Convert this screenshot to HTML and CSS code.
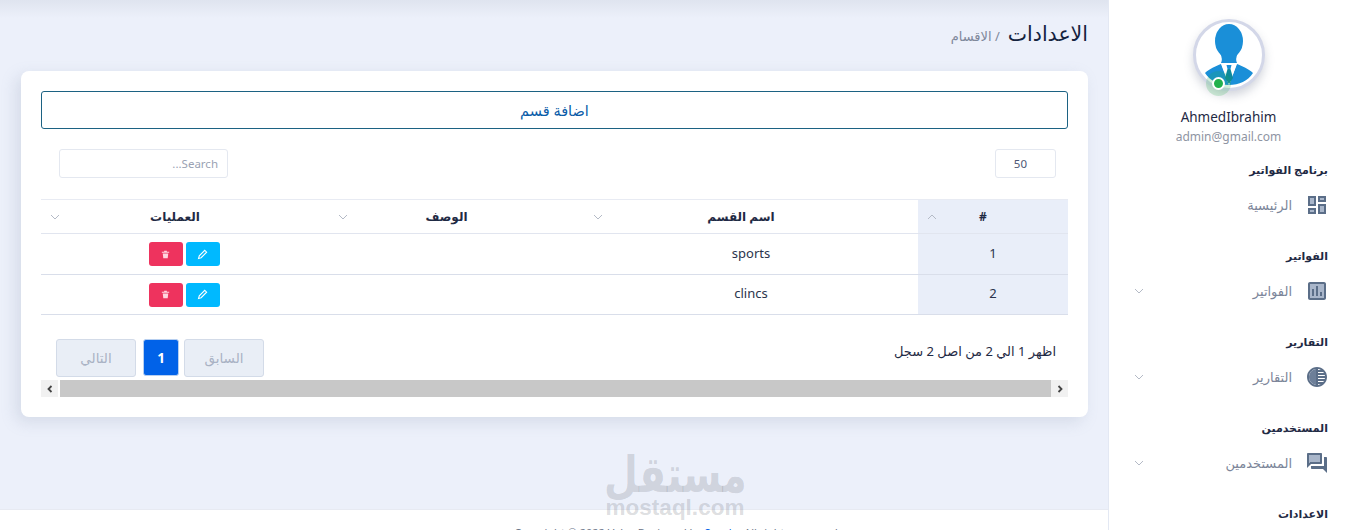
FILE: index.html
```html
<!DOCTYPE html>
<html lang="ar" dir="rtl">
<head>
	<title>الاقسام</title>
	<meta http-equiv="Content-Type" content="text/html; charset=utf-8" />
	<link rel="stylesheet" href="styles.css">
</head>
<body>
	<div class="page">
		<aside class="side">
			<div class="profile">
				<div class="avatar">
					<svg viewBox="0 0 66 66" width="66" height="66">
						<ellipse fill="#1a8fd8" cx="33" cy="19" rx="14" ry="17"/>
						<path fill="#1a8fd8" d="M24 31q3 6 1 10h16q-2-4 1-10z"/>
						<path fill="#1a8fd8" d="M9 51c4-4 11-7 16-9l8 21c-10 0-19-4-24-12zM57 51c-4-4-11-7-16-9l-8 21c10 0 19-4 24-12z"/>
						<path fill="#fff" d="M25 41h16l-8 22z"/>
						<path fill="#1a8fd8" d="M30.500 43h5l-1 4h-3z"/>
						<path fill="#0d8a9c" d="M31.500 47h3l2.500 9-4 6-4-6z"/>
					</svg>
					<span class="online"></span>
				</div>
				<div class="name">AhmedIbrahim</div>
				<div class="mail">admin@gmail.com</div>
			</div>
			<div class="cat">برنامج الفواتير</div>
			<div class="item">
				<svg class="ico" viewBox="0 0 24 24"><path class="two" d="M5 5h4v6H5zm10 8h4v6h-4zM5 17h4v2H5zM15 5h4v2h-4z"/><path d="M3 13h8V3H3v10zm2-8h4v6H5V5zm8 16h8V11h-8v10zm2-8h4v6h-4v-6zM13 3v6h8V3h-8zm6 4h-4V5h4v2zM3 21h8v-6H3v6zm2-4h4v2H5v-2z"/></svg>
				<span>الرئيسية</span>
			</div>
			<div class="cat">الفواتير</div>
			<div class="item">
				<svg class="ico" viewBox="0 0 24 24"><path class="two" d="M19 5H5v14h14V5zM9 17H7v-7h2v7zm4 0h-2V7h2v10zm4 0h-2v-4h2v4z"/><path d="M3 5v14c0 1.100.9 2 2 2h14c1.100 0 2-.9 2-2V5c0-1.100-.9-2-2-2H5c-1.100 0-2 .9-2 2zm2 0h14v14H5V5zm2 5h2v7H7zm4-3h2v10h-2zm4 6h2v4h-2z"/></svg>
				<span>الفواتير</span>
				<svg class="arrow" viewBox="0 0 12 12"><path d="M2 4l4 4 4-4"/></svg>
			</div>
			<div class="cat">التقارير</div>
			<div class="item">
				<svg class="ico" viewBox="0 0 24 24"><path d="M12 2C6.490 2 2 6.490 2 12s4.490 10 10 10 10-4.490 10-10S17.510 2 12 2zm-1 17.930c-3.940-.49-7-3.850-7-7.930s3.050-7.440 7-7.930v15.860zm2-15.860c1.030.13 2 .45 2.870.93H13v-.93zM13 7h5.240c.25.31.48.65.68 1H13V7zm0 3h6.740c.08.33.15.66.19 1H13v-1zm0 9.930V19h2.870c-.87.48-1.840.8-2.870.93zM18.240 17H13v-1h5.920c-.2.35-.43.69-.68 1zm1.500-3H13v-1h6.930c-.04.34-.11.67-.19 1z"/><path class="half" d="M11 19.930c-3.940-.49-7-3.850-7-7.930s3.050-7.440 7-7.930v15.860z"/></svg>
				<span>التقارير</span>
				<svg class="arrow" viewBox="0 0 12 12"><path d="M2 4l4 4 4-4"/></svg>
			</div>
			<div class="cat">المستخدمين</div>
			<div class="item">
				<svg class="ico" viewBox="0 0 24 24"><path class="two" d="M15 11V4H4v8.170l.59-.58.58-.59H6z"/><path d="M21 6h-2v9H6v2c0 .55.45 1 1 1h11l4 4V7c0-.55-.45-1-1-1zm-5 7c.55 0 1-.45 1-1V3c0-.55-.45-1-1-1H3c-.55 0-1 .45-1 1v14l4-4h10zM4.590 11.590l-.59.58V4h11v7H5.170l-.58.59z"/></svg>
				<span>المستخدمين</span>
				<svg class="arrow" viewBox="0 0 12 12"><path d="M2 4l4 4 4-4"/></svg>
			</div>
			<div class="cat">الاعدادات</div>
		</aside>

		<main class="main">
			<div class="content">
				<div class="crumbs">
					<h4>الاعدادات</h4>
					<span>/ الاقسام</span>
				</div>
				<div class="card">
					<button class="add">اضافة قسم</button>
					<div class="tools">
						<div class="length">50</div>
						<div class="search">Search...</div>
					</div>
					<table class="grid">
						<colgroup>
							<col class="c1"><col class="c2"><col class="c3"><col class="c4">
						</colgroup>
						<thead>
							<tr>
								<th class="on">#<svg class="sort" viewBox="0 0 12 12"><path d="M2 8l4-4 4 4"/></svg></th>
								<th>اسم القسم<svg class="sort" viewBox="0 0 12 12"><path d="M2 4l4 4 4-4"/></svg></th>
								<th>الوصف<svg class="sort" viewBox="0 0 12 12"><path d="M2 4l4 4 4-4"/></svg></th>
								<th>العمليات<svg class="sort" viewBox="0 0 12 12"><path d="M2 4l4 4 4-4"/></svg></th>
							</tr>
						</thead>
						<tbody>
							<tr class="first">
								<td class="on">1</td>
								<td>sports</td>
								<td></td>
								<td>
									<div class="ops">
										<a class="btn edit"><svg viewBox="0 0 12 12"><path d="M8.500 1.500l2 2-6 6-2.800.8.800-2.800z"/></svg></a>
										<a class="btn del"><svg viewBox="0 0 12 12"><path d="M2 3h8v1.200H2zM4.500 1.800h3V3h-3zM3 4.800h6l-.6 5.400H3.600z"/></svg></a>
									</div>
								</td>
							</tr>
							<tr>
								<td class="on">2</td>
								<td>clincs</td>
								<td></td>
								<td>
									<div class="ops">
										<a class="btn edit"><svg viewBox="0 0 12 12"><path d="M8.500 1.500l2 2-6 6-2.800.8.800-2.800z"/></svg></a>
										<a class="btn del"><svg viewBox="0 0 12 12"><path d="M2 3h8v1.200H2zM4.500 1.800h3V3h-3zM3 4.800h6l-.6 5.400H3.600z"/></svg></a>
									</div>
								</td>
							</tr>
						</tbody>
					</table>
					<div class="bottom">
						<div class="info">اظهر 1 الي 2 من اصل 2 سجل</div>
						<div class="pager">
							<a class="pg">السابق</a>
							<a class="pg cur">1</a>
							<a class="pg">التالي</a>
						</div>
					</div>
					<div class="bar">
						<span class="end"><svg viewBox="0 0 10 10"><path d="M3.500 2l3 3-3 3"/></svg></span>
						<span class="thumb"></span>
						<span class="end"><svg viewBox="0 0 10 10"><path d="M6.500 2l-3 3 3 3"/></svg></span>
					</div>
				</div>
			</div>
			<footer class="foot" dir="ltr">Copyright © 2022 Valex Designed by <a>Spruko</a> All rights reserved</footer>
			<div class="mark">
				<div class="mark-ar">مستقل</div>
				<div class="mark-en" dir="ltr">mostaql.com</div>
			</div>
		</main>
	</div>
</body>
</html>
```

FILE: styles.css
```css
*{
	margin: 0;
	padding: 0;
	box-sizing: border-box;
}
html, body{
	height: 100%;
	overflow: hidden;
}
body{
	font-family: "Noto Sans", "DejaVu Sans", sans-serif;
	font-size: 13px;
	color: #1f2a44;
	background: #ecf0fa;
}
.page{
	display: flex;
	height: 530px;
	overflow: hidden;
}

/* sidebar */
.side{
	width: 242px;
	flex-shrink: 0;
	background: #fff;
	border-left: 1px solid #e3e8f3;
	padding: 19px 22px 0 0;
}
.profile{
	display: flex;
	flex-direction: column;
	align-items: center;
	margin-right: -22px;
	margin-left: -2px;
	height: 143px;
}
.avatar{
	position: relative;
	width: 72px;
	height: 72px;
	border-radius: 50%;
	border: 3px solid #d3d7e8;
	background: #fff;
	box-shadow: 0 5px 10px rgba(80, 90, 120, 0.25);
	display: flex;
	align-items: center;
	justify-content: center;
}
.online{
	position: absolute;
	left: 16px;
	bottom: -2px;
	width: 13px;
	height: 13px;
	border-radius: 50%;
	background: #22b14c;
	border: 2px solid #fff;
	box-shadow: 0 0 0 6px rgba(34, 177, 76, 0.2);
}
.name{
	margin-top: 16px;
	font-size: 13.500px;
	line-height: 20px;
	color: #1f2a44;
}
.mail{
	font-size: 12px;
	line-height: 20px;
	color: #8f95a3;
}
.cat{
	font-size: 11px;
	font-weight: 700;
	line-height: 16px;
	color: #1f2a44;
	margin-bottom: 15px;
}
.item{
	display: flex;
	align-items: center;
	height: 24px;
	margin-right: -1px;
	margin-bottom: 31px;
	font-size: 13px;
	color: #7b8599;
}
.ico{
	width: 24px;
	height: 24px;
	margin-left: 13px;
	fill: #5b6e88;
	flex-shrink: 0;
}
.ico .two{
	fill: #a9b6ca;
}
.ico .half{
	fill: #6d7f99;
}
.arrow{
	width: 12px;
	height: 12px;
	margin-right: auto;
	margin-left: 24px;
	fill: none;
	stroke: #b4bac6;
	stroke-width: 1;
}

/* main */
.main{
	position: relative;
	flex: 1;
	min-width: 0;
}
.content{
	height: 509px;
	padding: 0 20px 0 21px;
	background: linear-gradient(#dfe4ef, #ecf0fa 18px);
}
.crumbs{
	display: flex;
	align-items: center;
	height: 71px;
	padding-bottom: 6px;
}
.crumbs h4{
	font-size: 20.500px;
	font-weight: 400;
	color: #14233f;
	margin-left: 8px;
}
.crumbs span{
	margin-top: 6px;
	font-size: 13px;
	color: #7f889b;
}
.card{
	height: 346px;
	padding: 20px;
	background: #fff;
	border-radius: 8px;
	box-shadow: -5px 5px 16px rgba(120, 135, 165, 0.2);
}
.add{
	display: block;
	width: 100%;
	height: 38px;
	font-family: inherit;
	font-size: 14.500px;
	color: #0a5ca8;
	background: #fff;
	border: 1px solid #1c6283;
	border-radius: 3px;
}
.tools{
	display: flex;
	justify-content: space-between;
	margin-top: 20px;
	padding: 0 12px 0 18px;
}
.length, .search{
	height: 29px;
	line-height: 27px;
	border: 1px solid #e4e8f0;
	border-radius: 3px;
	font-size: 11.500px;
}
.length{
	width: 61px;
	text-align: right;
	padding-right: 28px;
	color: #4d5875;
}
.search{
	width: 169px;
	padding-right: 9px;
	color: #9aa2b3;
}
.grid{
	width: 1027px;
	margin-top: 21px;
	table-layout: fixed;
	border-collapse: collapse;
}
.c1{ width: 150px; }
.c2{ width: 334px; }
.c3{ width: 255px; }
.c4{ width: 288px; }
.grid th{
	position: relative;
	height: 34px;
	padding: 0 30px 0 10px;
	font-size: 12px;
	font-weight: 700;
	color: #1f2a44;
	border-top: 1px solid #e8ebf3;
	border-bottom: 1px solid #e1e5ef;
}
.grid td{
	height: 40px;
	padding-bottom: 3px;
	text-align: center;
	font-size: 13px;
	color: #2b344c;
	border-bottom: 1px solid #d9deea;
}
.grid .first td{
	height: 41px;
}
.grid .on{
	background: #e9eef9;
}
.sort{
	position: absolute;
	left: 8px;
	top: 11px;
	width: 12px;
	height: 12px;
	fill: none;
	stroke: #b4bac6;
	stroke-width: 1;
}
.ops{
	display: flex;
	justify-content: center;
	gap: 3px;
	margin-top: 3px;
	padding-right: 2px;
}
.btn{
	display: flex;
	align-items: center;
	justify-content: center;
	width: 34px;
	height: 24px;
	border-radius: 3px;
}
.btn svg{
	width: 11px;
	height: 11px;
}
.edit{
	background: #00b9ff;
}
.edit svg{
	fill: none;
	stroke: #fff;
	stroke-width: 1.200;
}
.del{
	background: #ee335e;
}
.del svg{
	fill: #ffd5df;
}
.bottom{
	display: flex;
	justify-content: space-between;
	align-items: center;
	margin-top: 24px;
	padding: 0 12px 0 15px;
	height: 38px;
}
.info{
	padding-bottom: 14px;
	font-size: 13px;
	color: #1f2a44;
}
.pager{
	display: flex;
	align-items: flex-start;
	gap: 5px;
}
.pg{
	display: flex;
	align-items: center;
	justify-content: center;
	width: 80px;
	height: 38px;
	font-size: 13.500px;
	color: #a9b2c4;
	background: #e9eef6;
	border: 1px solid #d3dbe8;
	border-radius: 3px;
}
.cur{
	width: 36px;
	height: 37px;
	color: #fff;
	font-weight: 700;
	background: #0162e8;
	border-color: #b7cff0;
}
.pager .pg:last-child{
	margin-right: 2px;
}
.bar{
	display: flex;
	height: 17px;
	margin-top: 3px;
}
.end{
	display: flex;
	align-items: center;
	justify-content: center;
	width: 17px;
	background: #f1f1f1;
}
.end svg{
	width: 10px;
	height: 10px;
	fill: none;
	stroke: #444;
	stroke-width: 1.800;
}
.thumb{
	flex: 1;
	background: #c8c8c8;
	margin: 0 0 0 2px;
}

/* footer, watermark */
.foot{
	height: 40px;
	padding: 15px 0 0 244px;
	text-align: center;
	font-size: 11px;
	line-height: 16px;
	color: #6b7488;
	background: #fff;
	border-top: 1px solid #e7eaf2;
}
.foot a{
	color: #0162e8;
}
.mark{
	position: absolute;
	left: 605px;
	top: 448px;
	width: 140px;
	display: flex;
	flex-direction: column;
	align-items: center;
	color: rgba(110, 115, 125, 0.24);
	font-weight: 700;
	pointer-events: none;
}
.mark-ar{
	font-size: 50px;
	line-height: 50px;
	white-space: nowrap;
	transform: scaleX(0.78);
}
.mark-en{
	margin-top: -3px;
	font-family: "Liberation Sans", sans-serif;
	font-size: 22.500px;
	line-height: 26px;
	white-space: nowrap;
}
```
